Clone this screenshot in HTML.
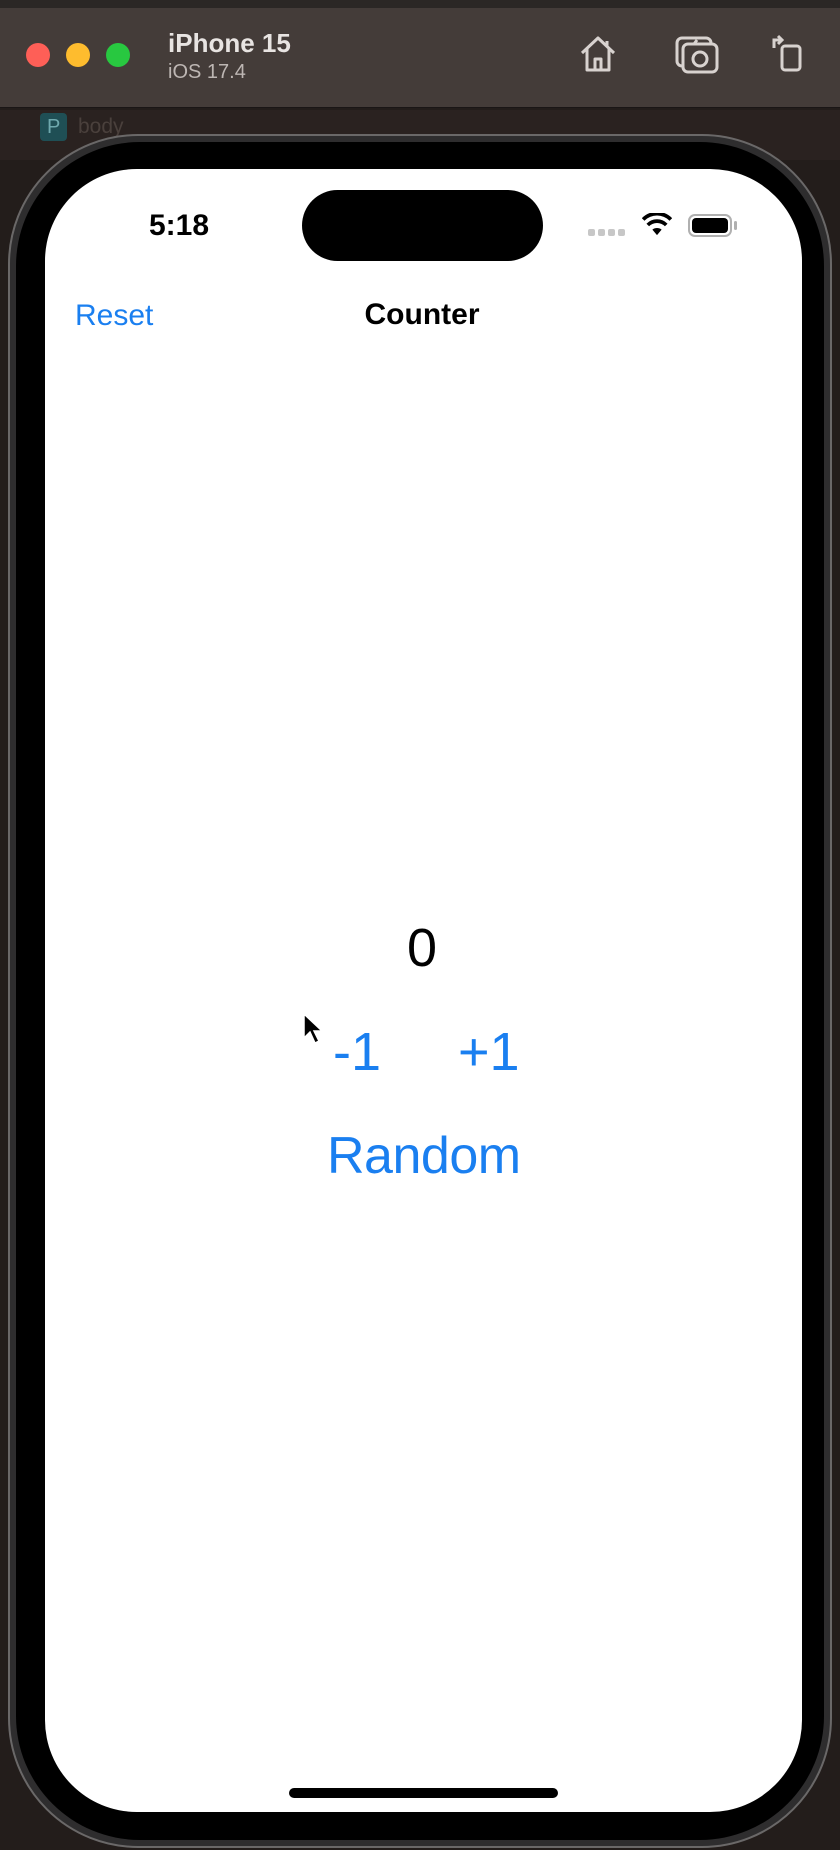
<!DOCTYPE html>
<html><head><meta charset="utf-8"><style>
*{margin:0;padding:0;box-sizing:border-box}
body{width:840px;height:1850px;background:#231d1b;position:relative;overflow:hidden;font-family:"Liberation Sans",sans-serif}
.abs{position:absolute}
.t{position:absolute;white-space:nowrap;line-height:1}
</style></head><body>
<div class="abs" style="left:0;top:0;width:840px;height:8px;background:#2b2725"></div>
<div class="abs" style="left:0;top:8px;width:840px;height:100px;background:#443c39;border-bottom:1px solid #1a1616"></div>
<div class="abs" style="left:26px;top:43px;width:24px;height:24px;border-radius:50%;background:#fe5f57"></div>
<div class="abs" style="left:66px;top:43px;width:24px;height:24px;border-radius:50%;background:#febc2e"></div>
<div class="abs" style="left:106px;top:43px;width:24px;height:24px;border-radius:50%;background:#28c840"></div>
<div class="t" style="left:168px;top:30px;font-size:26px;font-weight:bold;color:#e8e4e2">iPhone 15</div>
<div class="t" style="left:168px;top:62px;font-size:20px;color:#bdb6b3">iOS 17.4</div>
<svg class="abs" style="left:578px;top:34px" width="40" height="40" viewBox="0 0 40 40" fill="none" stroke="#d8d2cf" stroke-width="3" stroke-linejoin="round"><path d="M4 19 L20 4 L36 19 M9 15 V36 H31 V15 M17 36 V25 H23 V36"/><path d="M29 7 V12"/></svg>
<svg class="abs" style="left:675px;top:36px" width="44" height="38" viewBox="0 0 44 38" fill="none" stroke="#d8d2cf" stroke-width="3"><rect x="2" y="2" width="34" height="28" rx="5"/><rect x="8" y="8" width="34" height="28" rx="5" fill="#443c39"/><circle cx="25" cy="23" r="7"/><path d="M19 8 L22 4"/></svg>
<svg class="abs" style="left:770px;top:32px" width="34" height="40" viewBox="0 0 34 40" fill="none" stroke="#d8d2cf" stroke-width="3"><rect x="12" y="14" width="18" height="24" rx="3"/><path d="M4 16 V8 H12 M8 4 L12 8 L8 12"/></svg>
<div class="abs" style="left:0;top:110px;width:840px;height:50px;background:#2a2220"></div>
<div class="abs" style="left:40px;top:113px;width:27px;height:28px;border-radius:4px;background:#1f4f55"></div>
<div class="t" style="left:47px;top:117px;font-size:20px;color:#6fa9ae">P</div>
<div class="t" style="left:78px;top:116px;font-size:21px;color:#4a403c">body</div>
<div class="abs" style="left:8px;top:134px;width:824px;height:1714px;border-radius:130px;background:#2e2d2e;border:2px solid #6a6868"></div>
<div class="abs" style="left:16px;top:142px;width:808px;height:1698px;border-radius:124px;background:#000"></div>
<div class="abs" style="left:45px;top:169px;width:757px;height:1643px;border-radius:92px;background:#fff"></div>
<div class="abs" style="left:302px;top:190px;width:241px;height:71px;border-radius:36px;background:#000"></div>
<div class="t" style="left:149px;top:211px;font-size:30px;font-weight:bold;color:#000">5:18</div>
<div class="abs" style="left:588px;top:229px;width:7px;height:7px;border-radius:2px;background:#c7c7c7"></div>
<div class="abs" style="left:598px;top:229px;width:7px;height:7px;border-radius:2px;background:#c7c7c7"></div>
<div class="abs" style="left:608px;top:229px;width:7px;height:7px;border-radius:2px;background:#c7c7c7"></div>
<div class="abs" style="left:618px;top:229px;width:7px;height:7px;border-radius:2px;background:#c7c7c7"></div>
<svg class="abs" style="left:642px;top:213px" width="30" height="24" viewBox="0 0 32 26"><path d="M16 24 L11 18 A8 8 0 0 1 21 18 Z" fill="#000"/><path d="M6 13 A14 14 0 0 1 26 13" stroke="#000" stroke-width="4" fill="none"/><path d="M1 7 A21 21 0 0 1 31 7" stroke="#000" stroke-width="4" fill="none"/></svg>
<div class="abs" style="left:688px;top:214px;width:44px;height:23px;border-radius:7px;border:2px solid #b0b0b0;padding:2px"><div style="width:100%;height:100%;background:#000;border-radius:4px"></div></div>
<div class="abs" style="left:734px;top:221px;width:3px;height:9px;border-radius:2px;background:#b0b0b0"></div>
<div class="t" style="left:75px;top:301px;font-size:30px;color:#1a7ff0">Reset</div>
<div class="t" style="left:0;width:844px;text-align:center;top:300px;font-size:30px;font-weight:bold;color:#000">Counter</div>
<div class="t" style="left:0;width:844px;text-align:center;top:921px;font-size:54px;color:#000">0</div>
<div class="t" style="left:333px;top:1025px;font-size:54px;color:#1a7ff0">-1</div>
<div class="t" style="left:458px;top:1025px;font-size:54px;color:#1a7ff0">+1</div>
<div class="t" style="left:327px;top:1130px;font-size:52px;letter-spacing:-0.5px;color:#1a7ff0">Random</div>
<svg class="abs" style="left:302px;top:1012px" width="22" height="34" viewBox="0 0 22 34"><path d="M2 2 V26 L8 20 L13 31 L17 29 L12 19 H20 Z" fill="#000" stroke="#fff" stroke-width="1.5"/></svg>
<div class="abs" style="left:289px;top:1788px;width:269px;height:10px;border-radius:5px;background:#000"></div>
</body></html>
